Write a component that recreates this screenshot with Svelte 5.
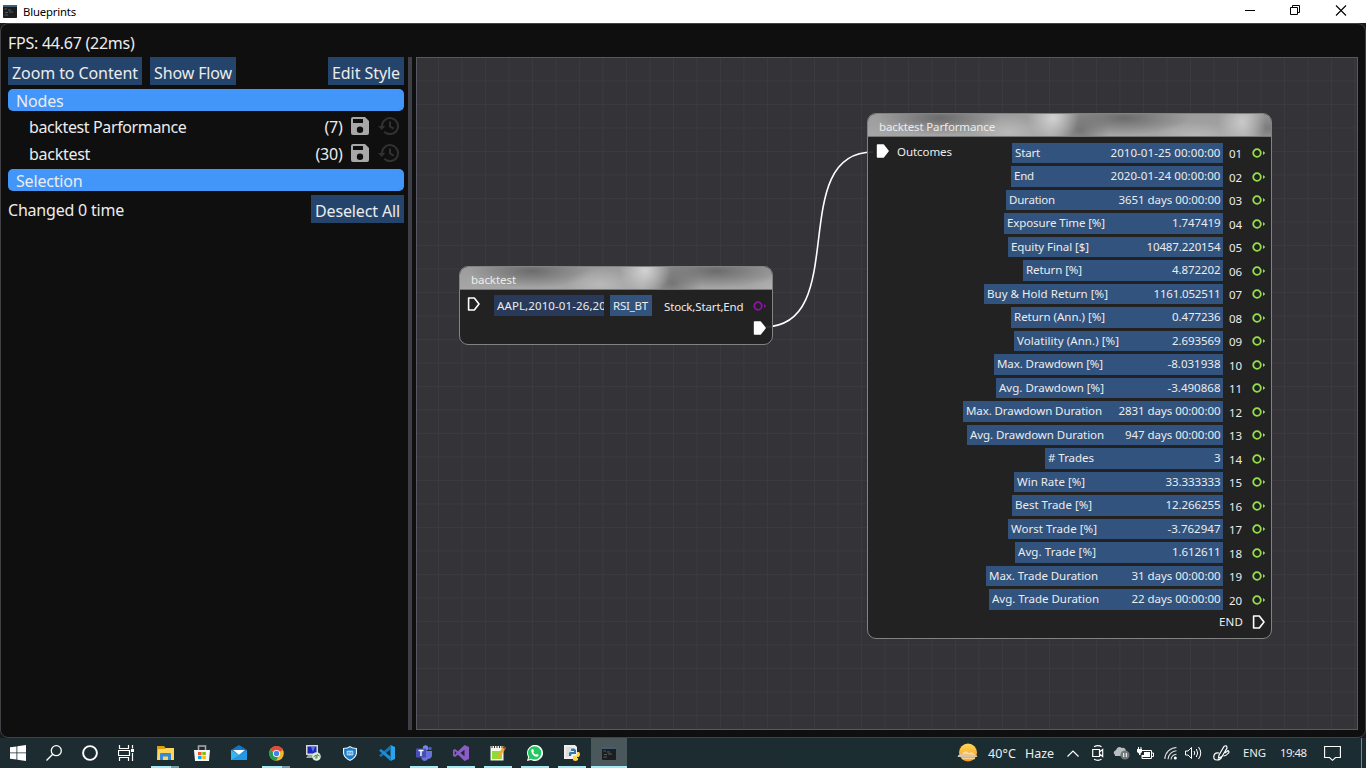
<script>
  const rows = [
    ['Start', '2010-01-25 00:00:00', 211, 25],
    ['End', '2020-01-24 00:00:00', 212, 20],
    ['Duration', '3651 days 00:00:00', 217, 46],
    ['Exposure Time [%]', '1.747419', 219, 98],
    ['Equity Final [$]', '10487.220154', 215, 78],
    ['Return [%]', '4.872202', 200, 56],
    ['Buy & Hold Return [%]', '1161.052511', 239, 121],
    ['Return (Ann.) [%]', '0.477236', 212, 91],
    ['Volatility (Ann.) [%]', '2.693569', 209, 102],
    ['Max. Drawdown [%]', '-8.031938', 229, 106],
    ['Avg. Drawdown [%]', '-3.490868', 227, 105],
    ['Max. Drawdown Duration', '2831 days 00:00:00', 260, 136],
    ['Avg. Drawdown Duration', '947 days 00:00:00', 256, 134],
    ['# Trades', '3', 178, 46],
    ['Win Rate [%]', '33.333333', 209, 68],
    ['Best Trade [%]', '12.266255', 211, 77],
    ['Worst Trade [%]', '-3.762947', 215, 86],
    ['Avg. Trade [%]', '1.612611', 208, 78],
    ['Max. Trade Duration', '31 days 00:00:00', 237, 109],
    ['Avg. Trade Duration', '22 days 00:00:00', 234, 107]
  ];
  const valueWidths = [110, 110, 102, 48.5, 74, 48.5, 67, 48.5, 48.5, 53, 53, 102, 95.5, 6.5, 55, 55, 53, 48.5, 89, 89];
  const nodes = [['backtest Parformance', '(7)', 157.5, 18], ['backtest', '(30)', 61, 27]];

  // Spreads the letters of a label so that it fills the given width.
  function fit(el, width) {
    const natural = el.getBoundingClientRect().width;
    el.style.letterSpacing = `${(width - natural) / el.textContent.length}px`;
  }
</script>

{#snippet t(text, w)}<span class="t" use:fit={w}>{text}</span>{/snippet}

{#snippet flowPin(filled)}
  <svg class="flow" width="13" height="14" viewBox="0 0 13 14"><path d="M1.6 1H7.3L12 7L7.3 13H1.6Z" fill={filled ? '#fff' : 'none'} stroke="#fff" stroke-width="1.6" stroke-linejoin="round" /></svg>
{/snippet}

{#snippet dataPin(color)}
  <svg class="data" width="14" height="12" viewBox="0 0 14 12"><circle cx="5" cy="6" r="3.8" fill="none" stroke={color} stroke-width="1.8" /><path d="M11 4L13.2 6L11 8Z" fill={color} /></svg>
{/snippet}

{#snippet consoleIcon()}
  <svg width="14" height="13" viewBox="0 0 14 13"><rect width="14" height="13" rx=".8" fill="#1b1d1f" /><path d="M0 0H14V2H0Z" fill="#3d5f78" /><path d="M1.5 4H4M5 5H8M2 7.5H5M6 7H10M1.5 10H5" stroke="#6b6e70" stroke-width=".8" /></svg>
{/snippet}

<div class="screen">
  <header class="titlebar">
    {@render consoleIcon()}
    <span class="name">{@render t('Blueprints', 53)}</span>
    <div class="controls">
      <svg width="46" height="23" viewBox="0 0 46 23"><path d="M19 10.5H29" stroke="#000" /></svg>
      <svg width="46" height="23" viewBox="0 0 46 23"><path d="M18.5 7.5H25.5V14.5H18.5ZM20.5 7.500V5.500H27.5V12.500H25.5" fill="none" stroke="#000" /></svg>
      <svg width="46" height="23" viewBox="0 0 46 23"><path d="M18 5.500L28 15.500M28 5.500L18 15.500" stroke="#000" stroke-width="1.1" /></svg>
    </div>
  </header>

  <main class="window">
    <div class="fps">{@render t('FPS: 44.67 (22ms)', 126.500)}</div>
    <div class="body">
      <aside>
        <div class="buttons">
          <button>{@render t('Zoom to Content', 126)}</button>
          <button>{@render t('Show Flow', 78)}</button>
          <button class="end">{@render t('Edit Style', 68)}</button>
        </div>
        <div class="section">{@render t('Nodes', 47.500)}</div>
        <ul>
          {#each nodes as [name, id, w, iw]}
            <li>
              <span>{@render t(name, w)}</span>
              <span class="end">{@render t(id, iw)}</span>
              <svg class="save" width="18" height="18" viewBox="0 0 18 18"><path fill="#a8a8a8" fill-rule="evenodd" d="M2 0H14L18 4V16Q18 18 16 18H2Q0 18 0 16V2Q0 0 2 0ZM2 2V6H12V2ZM9 9.500A3.200 3.200 0 1 0 9 15.900A3.200 3.200 0 1 0 9 9.500Z" /></svg>
              <svg class="history" width="21" height="18" viewBox="0 0 21 18" fill="none" stroke="#323232" stroke-width="2"><path d="M4 9A8 8 0 1 1 6.300 14.700M12 4.500V9.500L15.700 11.700" /><path d="M0 9H7.300L3.700 13Z" fill="#323232" stroke="none" /></svg>
            </li>
          {/each}
        </ul>
        <div class="section second">{@render t('Selection', 66.500)}</div>
        <div class="selection">
          <span class="changed">{@render t('Changed 0 time', 116)}</span>
          <button class="end">{@render t('Deselect All', 85)}</button>
        </div>
      </aside>
      <div class="splitter"></div>
      <section class="canvas">
        <svg class="link" width="940" height="671" viewBox="417 58 940 671" fill="none">
          <path d="M764 327C852 327 785 152 873 152" stroke="#fff" stroke-width="1.600" />
        </svg>

        <article class="node small">
          <h2>{@render t('backtest', 45)}</h2>
          <div class="io">
            {@render flowPin(false)}
            <div class="input">{@render t('AAPL,2010-01-26,20', 109)}</div>
            <div class="chip">{@render t('RSI_BT', 35)}</div>
            <span class="out">{@render t('Stock,Start,End', 79.500)}</span>
            {@render dataPin('#8a14a5')}
          </div>
          <div class="last">{@render flowPin(true)}</div>
        </article>

        <article class="node large">
          <h2>{@render t('backtest Parformance', 116)}</h2>
          <div class="content">
            <div class="entry">{@render flowPin(true)}<span>{@render t('Outcomes', 55)}</span></div>
            <div class="outputs">
              {#each rows as [label, value, width, lw], i}
                <div class="output">
                  <div class="bar" style="width: {width}px">
                    {@render t(label, lw)}
                    {@render t(value, valueWidths[i])}
                  </div>
                  <span class="num">{@render t(String(i + 1).padStart(2, '0'), 13)}</span>
                  {@render dataPin('#93e04a')}
                </div>
              {/each}
              <div class="output finish"><span>{@render t('END', 24)}</span>{@render flowPin(false)}</div>
            </div>
          </div>
        </article>
      </section>
    </div>
  </main>

  <footer>
    <div class="cell"><svg width="16" height="16" viewBox="0 0 16 16"><path fill="#fff" d="M0 2.300L6.500 1.400V7.500H0ZM7.300 1.200L16 0V7.500H7.300ZM0 8.300H6.500V14.600L0 13.700ZM7.300 8.300H16V16L7.300 14.800Z" /></svg></div>
    <div class="cell"><svg width="16" height="16" viewBox="0 0 16 16" fill="none" stroke="#fff" stroke-width="1.300"><circle cx="10.300" cy="5.700" r="5" /><path d="M6.700 9.300L.5 15.500" /></svg></div>
    <div class="cell"><svg width="16" height="16" viewBox="0 0 16 16" fill="none" stroke="#fff" stroke-width="1.900"><circle cx="8" cy="8" r="6.900" /></svg></div>
    <div class="cell gap"><svg width="17" height="16" viewBox="0 0 17 16" fill="none" stroke="#fff" stroke-width="1.200"><path d="M1.500 0V3.500H10.500V0M1.500 16V12.500H10.500V16M.5 5.500H11.500V10.500H.5ZM14.500 0V3.500M14.500 8V16" /><path d="M13 4H16V7H13Z" fill="#fff" stroke="none" /></svg></div>
    <div class="cell app run split"><svg width="17" height="16" viewBox="0 0 17 16"><path d="M0 1H7L8.500 3H16V14H0Z" fill="#dfa00d" /><path d="M1 4H8L9 3H17V15H0Z" fill="#ffd55c" /><path d="M3 15V9Q3 8 4 8H13Q14 8 14 9V15H11V11.500H6V15Z" fill="#348bd5" /></svg></div>
    <div class="cell app"><svg width="16" height="17" viewBox="0 0 16 17"><path d="M4.500 5V1H11.500V5" fill="none" stroke="#aaa" stroke-width="1.500" /><path d="M0 5H16L15 16H1Z" fill="#f5f5f5" /><path d="M4 7H7.500V10H4Z" fill="#f35325" /><path d="M8.300 7H11.800V10H8.300Z" fill="#81bc06" /><path d="M4 10.800H7.500V14H4Z" fill="#05a6f0" /><path d="M8.300 10.800H11.800V14H8.300Z" fill="#ffba08" /></svg></div>
    <div class="cell app"><svg width="16" height="16" viewBox="0 0 16 16"><path d="M0 5L8 0L16 5V15H0Z" fill="#1475c6" /><path d="M2 5H14L8 10Z" fill="#fff" /><path d="M0 5L16 15H0Z" fill="#35b7f0" /><path d="M16 5L0 15H16Z" fill="#2399e5" /></svg></div>
    <div class="cell app run split"><svg width="15" height="15" viewBox="0 0 15 15"><circle cx="7.500" cy="7.500" r="7.300" fill="#f2b632" /><path d="M7.500 7.500L1 4A7.300 7.300 0 0 1 14 4Z" fill="#e34a3a" /><path d="M1 4A7.300 7.300 0 0 0 7 14.800L10 9L7 8Z" fill="#27994d" /><circle cx="7.500" cy="7.500" r="3.600" fill="#fff" /><circle cx="7.500" cy="7.500" r="2.700" fill="#3f83f2" /></svg></div>
    <div class="cell app"><svg width="16" height="16" viewBox="0 0 16 16"><path d="M1 0H13V10H1Z" fill="#d7d7ce" /><path d="M2.500 1.500H11.500V8.500H2.500Z" fill="#1729b9" /><path d="M6 2H10L8 7Z" fill="#5575f2" /><path d="M3 10H10L12 13H1Z" fill="#9da49f" /><circle cx="11.500" cy="11.500" r="4.300" fill="#e3e8df" /><path d="M8.500 12L11 10V14M14.500 11L12 9.500V13" stroke="#389738" fill="none" /></svg></div>
    <div class="cell app"><svg width="14" height="15" viewBox="0 0 15 16"><path d="M7.500 0Q10 2 15 2V8Q14 13 7.500 16Q1 13 0 8V2Q5 2 7.500 0Z" fill="#e9f4fc" /><path d="M7.500 1.200Q10 3 13.800 3V8Q13 12 7.500 14.700Q2 12 1.200 8V3Q5 3 7.500 1.200Z" fill="#197bc9" /><path d="M4.500 5.500H10.500V9.500H4.500ZM6.500 5.500V9.500M8.500 5.500V9.500" stroke="#e9f4fc" fill="none" stroke-width=".9" /></svg></div>
    <div class="cell app"><svg width="16" height="16" viewBox="0 0 16 16"><path d="M11.500 0L16 2V14L11.500 16Z" fill="#29a5ef" /><path d="M11.500 0V4.500L2 12L0 10.500L9.500 2Z" fill="#1074b8" /><path d="M2 4L11.500 11.500V16L0 5.500Z" fill="#1c8ed5" /></svg></div>
    <div class="cell app run"><svg width="16" height="16" viewBox="0 0 16 16"><circle cx="9.500" cy="3" r="2.700" fill="#7b83eb" /><circle cx="14" cy="3.500" r="1.800" fill="#5059c9" /><path d="M7 6H16V11Q15 14 12 14Q11 16 8 16Q5 15 5 11Z" fill="#6972d8" /><rect y="3.500" width="10" height="9" rx=".7" fill="#464eb8" /><path d="M2.500 5.500H7.500M5 5.500V11" stroke="#fff" stroke-width="1.400" /></svg></div>
    <div class="cell app run"><svg width="16" height="16" viewBox="0 0 16 16"><path d="M11.500 0L16 2V14L11.500 16L5 9.700L2 12L0 11V5L2 4L5 6.300ZM11.500 4.700L7.500 8L11.500 11.300ZM1.800 6V10L3.700 8Z" fill="#8d5bc5" fill-rule="evenodd" /></svg></div>
    <div class="cell app run"><svg width="16" height="16" viewBox="0 0 16 16"><path d="M.5 1H13.500V15.500H.5Z" fill="#f4f6ec" /><path d="M2 6H12V14H2Z" fill="#8bdb39" /><path d="M2 0V3M4.500 0V3M7 0V3M9.500 0V3M12 0V3" stroke="#333" /><path d="M13.500 1L16 3L9 13L6.500 14L7 11Z" fill="#e8ae30" /><path d="M13.500 1L16 3L15 4.500L12.500 2.500Z" fill="#bd302d" /></svg></div>
    <div class="cell app run"><svg width="16" height="16" viewBox="0 0 16 16"><path d="M0 16L1.100 12A8 8 0 1 1 4 14.900Z" fill="#fff" /><path d="M1.500 14.500L2.200 11.800A6.700 6.700 0 1 1 4.300 13.700Z" fill="#25c760" /><path d="M5 4L6.500 4.500L7 6.300L6.300 7.200Q7 8.800 9 9.700L9.800 9L11.600 9.800Q11.500 12 9.500 11.800Q5.500 11 4.300 6.500Q4 5 5 4Z" fill="#fff" /></svg></div>
    <div class="cell app run"><svg width="16" height="16" viewBox="0 0 16 16"><path d="M0 0H11L13 2V14H0Z" fill="#eee" /><path d="M2 3H8M2 5H8M2 7H7M2 9H6M2 11H5" stroke="#bbb" stroke-width=".7" /><path d="M7 4Q10 2 12 5V9H8Q7 9 7 11H5V8Q5 7 7 7H10V6H7Z" fill="#3476ab" /><path d="M13 7H15Q17 9 15 12H12V13H14V15Q11 17 9 15V11H12Q13 11 13 9Z" fill="#ffd342" /></svg></div>
    <div class="cell app run active">{@render consoleIcon()}</div>

    <div class="tray">
      <div class="ti"><svg width="22" height="20" viewBox="0 0 22 20"><defs><linearGradient id="sun" x2="0" y2="1"><stop stop-color="#ffd65a" /><stop offset="1" stop-color="#f79817" /></linearGradient></defs><circle cx="11" cy="9.500" r="9" fill="url(#sun)" /><path d="M5 11Q8 6 12 10Q16 8 18 12Z" fill="#f1d9b0" /><path d="M1 12.500Q5 9.500 9 12H19Q21 13 20 14H2Q0 14 1 12.500Z" fill="#d9c6a8" /><path d="M5 15.500H18" stroke="#f7d48e" stroke-width="1.500" /></svg></div>
      <span class="temp">{@render t('40°C', 28)}</span>
      <span class="haze">{@render t('Haze', 29)}</span>
      <svg class="chev" width="12" height="7" viewBox="0 0 12 7"><path d="M.5 6.500L6 1L11.500 6.500" fill="none" stroke="#fff" stroke-width="1.200" /></svg>
      <svg class="cam" width="12" height="16" viewBox="0 0 12 16" fill="none" stroke="#fff" stroke-width="1.200"><path d="M.700 4.500H7.500V11.500H.700ZM7.500 7L10.700 4.500V11.500L7.500 9M2 1.700Q6 -.3 9.500 1.700M2 14.300Q6 16.300 9.500 14.300" /></svg>
      <svg class="cloud" width="17" height="14" viewBox="0 0 17 14"><path d="M2 9Q-1 6 3 4Q5 -1 9 2Q12 1 13 5L12 10H2Z" fill="#b9bec0" /><circle cx="12" cy="9" r="4.600" fill="#727778" /><path d="M10.700 7V11M13.300 7V11" stroke="#fff" /></svg>
      <svg class="battery" width="17" height="13" viewBox="0 0 17 13"><path d="M5 3.500H14.500V11.500H5V8M15 6H16.500V9.500H15" fill="none" stroke="#fff" /><path d="M7 5H13V10H5V8H7ZM0 2H5V5L3.500 6.500V8H2V6.500L0 5ZM1 0H2V2H1ZM3.500 0H4.500V2H3.500Z" fill="#fff" /></svg>
      <svg class="wifi" width="13" height="14" viewBox="0 0 13 14" fill="none" stroke="#ddd" stroke-width="1.100"><path d="M.8 13A12 12 0 0 1 12.500 1.500M4 13.300A9 9 0 0 1 12.500 4.800M7 13.500A6 6 0 0 1 12.500 8.200" /><circle cx="11.300" cy="12" r="1.500" fill="#fff" stroke="none" /></svg>
      <svg class="speaker" width="17" height="14" viewBox="0 0 17 14" fill="none" stroke="#fff"><path d="M.500 5H3L6.500 1.500V12.500L3 9H.500ZM9 5Q10.500 7 9 9M11.300 3Q14 7 11.300 11M13.500 1Q18 7 13.500 13" /></svg>
      <svg class="pen" width="17" height="16" viewBox="0 0 17 16" fill="none" stroke="#fff" stroke-width="1.200"><path d="M6 10L11 1.500Q14 -.5 14 3L9 11.500L5.500 13ZM6 8Q2 7 1 10.500Q0 15 4 15Q8 15 9 11M12 8L15 5.500Q17 7 15 8.500Q13 11 10.500 11" /></svg>
      <span class="lang">{@render t('ENG', 23)}</span>
      <span class="time">{@render t('19:48', 26.500)}</span>
      <svg class="note" width="17" height="16" viewBox="0 0 17 16"><path d="M.600 1.500H16.400V12.500H11.500L8.500 15.300L5.500 12.500H.600Z" fill="none" stroke="#fff" stroke-width="1.100" /></svg>
      <i class="peek"></i>
    </div>
  </footer>
</div>

<style>
  :global(body) { margin: 0; overflow: hidden; }
  * { box-sizing: border-box; }
  .screen { width: 1366px; height: 768px; display: flex; flex-direction: column; background: #1c2b30; font-family: "Noto Sans", "Open Sans", sans-serif; color: #ececec; overflow: hidden; }
  svg { display: block; flex: none; }
  .t { display: inline-block; white-space: pre; }
  .end { margin-left: auto; }

  .titlebar { height: 23px; background: #fff; color: #000; display: flex; align-items: center; padding-left: 3px; font-size: 11.300px; flex: none; }
  .name { margin-left: 6px; }
  .controls { display: flex; margin-left: auto; margin-right: 2px; }

  .window { height: 715px; flex: none; background: #0f0f0f; border: 1px solid #414146; border-radius: 8px; padding: 6px 7px 7px; box-shadow: 0 0 0 4px #17191b; clip-path: inset(0); font-size: 16px; display: flex; flex-direction: column; }
  .fps { height: 27px; line-height: 27px; flex: none; }
  .body { display: flex; height: 673px; }
  aside { width: 396px; flex: none; }
  .buttons, .selection { display: flex; height: 28px; gap: 8px; line-height: 28px; }
  button { font: inherit; color: inherit; background: #24446b; border: 0; padding: 2px 4px 0; line-height: 28px; height: 28px; white-space: nowrap; display: flex; align-items: flex-start; }
  .changed { padding-top: 1px; }
  .section { height: 22px; margin: 4px 0; background: #4296fa; border-radius: 5px; padding: 1px 8px 0; line-height: 22px; }
  .second { margin-top: 0; }
  ul { list-style: none; padding: 0 5.500px 0 21px; margin: 0; height: 54px; }
  li { height: 27px; display: flex; line-height: 25px; }
  .save { margin: 2px 0 0 8px; }
  .history { margin: 2px 0 0 9px; }
  .splitter { width: 4px; margin: 0 4px; background: #3f3f47; flex: none; }
  .canvas { position: relative; width: 942px; height: 673px; flex: none; overflow: hidden; border: 1px solid #5a5662; background-color: #333338;
    background-image: linear-gradient(90deg, #3a3a3f 1px, transparent 1px), linear-gradient(#3a3a3f 1px, transparent 1px); background-size: 23.500px 23.500px; background-position: 21px 0, 0 22.500px; }
  .link { position: absolute; inset: 0; }

  .node { position: absolute; background: rgba(33, 33, 34, .92); border: 1px solid #828284; border-radius: 9px; overflow: hidden; font-size: 11.500px; }
  .small { left: 42px; top: 208px; width: 314px; height: 79px; }
  .large { left: 450px; top: 55px; width: 405px; height: 526px; }
  h2 { margin: 0; height: 23px; padding: 1px 0 0 11px; font-size: inherit; font-weight: 400; line-height: 23px; border-bottom: 1px solid #777;
    background:
      radial-gradient(ellipse 26px 24px at 185px 4px, rgba(212, 212, 212, .95), transparent),
      radial-gradient(ellipse 24px 26px at 374px 8px, rgba(205, 205, 205, .9), transparent),
      radial-gradient(ellipse 34px 16px at 140px 18px, rgba(190, 190, 190, .8), transparent),
      radial-gradient(ellipse 40px 14px at 326px 22px, rgba(190, 190, 190, .7), transparent),
      radial-gradient(ellipse 62px 17px at 72px 4px, rgba(105, 105, 105, .95), transparent),
      radial-gradient(ellipse 30px 22px at 212px 16px, rgba(112, 112, 112, .9), transparent),
      radial-gradient(ellipse 66px 17px at 256px 4px, rgba(105, 105, 105, .95), transparent),
      radial-gradient(ellipse 24px 18px at 400px 14px, rgba(118, 118, 118, .9), transparent),
      linear-gradient(#9c9c9c, #a6a6a6); }
  .io { display: flex; height: 31px; padding-top: 5px; align-items: flex-start; }
  .io > :global(.flow) { margin: 2px 0 0 7px; }
  .input { margin-left: 14px; width: 110px; height: 21px; padding-left: 3px; line-height: 22px; background: #29395a; overflow: hidden; }
  .chip { margin-left: 6px; width: 42px; height: 21px; padding-left: 3px; line-height: 22px; background: #31537e; }
  .out { margin-left: 12px; line-height: 24px; }
  .io > :global(.data) { margin: 5px 0 0 9.500px; }
  .last { display: flex; justify-content: flex-end; padding: 0 6.500px 0 0; }
  .content { display: flex; justify-content: space-between; }
  .entry { display: flex; padding: 8px 0 0 8px; height: 30px; }
  .entry > :global(.flow) { margin-top: -1px; }
  .entry span { line-height: 16px; }
  .entry > span { margin-left: 8px; margin-right: -8px; }
  .entry > span > :global(.t) { vertical-align: top; margin-top: -1px; }
  .outputs { padding: 5px 5px 0 0; }
  .output { height: 23.500px; display: flex; justify-content: flex-end; align-items: flex-start; }
  .bar { height: 20.500px; background: #31537e; padding: 0 2.500px 0 3px; margin-top: .5px; display: flex; justify-content: space-between; line-height: 20.500px; }
  .num { margin-left: 6px; width: 13px; line-height: 23px; }
  .output > :global(.data) { margin: 5px 0 0 10px; }
  .finish span { line-height: 19px; }
  .finish > :global(.flow) { margin: 2.500px 1px 0 9px; }

  footer { height: 30px; display: flex; flex: none; align-items: stretch; background: linear-gradient(90deg, #1d2c31, #1b2c32); }
  .cell { width: 36px; display: flex; align-items: center; justify-content: center; flex: none; position: relative; }
  .gap { margin-right: 3px; }
  .app { margin-right: 1px; }
  .run::after { content: ""; position: absolute; left: 4px; bottom: 0; width: 28px; height: 2px; background: #a5e9f5; }
  .split::after { background: linear-gradient(90deg, #a5e9f5 20px, #729da4 20px); }
  .active { background: #4a575b; }
  .active::after { left: 0; width: 36px; }
  .tray { margin-left: auto; width: 409px; display: flex; align-items: center; font-size: 11.400px; }
  .ti { width: 22px; }
  .temp, .haze { margin-left: 9px; font-size: 12.500px; }
  .chev { margin-left: 13px; }
  .cam { margin-left: 13px; }
  .cloud { margin-left: 9px; }
  .battery { margin-left: 7px; }
  .wifi { margin-left: 10px; }
  .speaker { margin-left: 8px; }
  .pen { margin-left: 11px; }
  .lang { margin-left: 13px; }
  .time { margin-left: 14px; }
  .lang, .time { padding-bottom: 2px; }
  .note { margin-left: 17px; }
  .peek { width: 1px; height: 30px; background: #7a8589; margin-left: 20px; }
</style>
